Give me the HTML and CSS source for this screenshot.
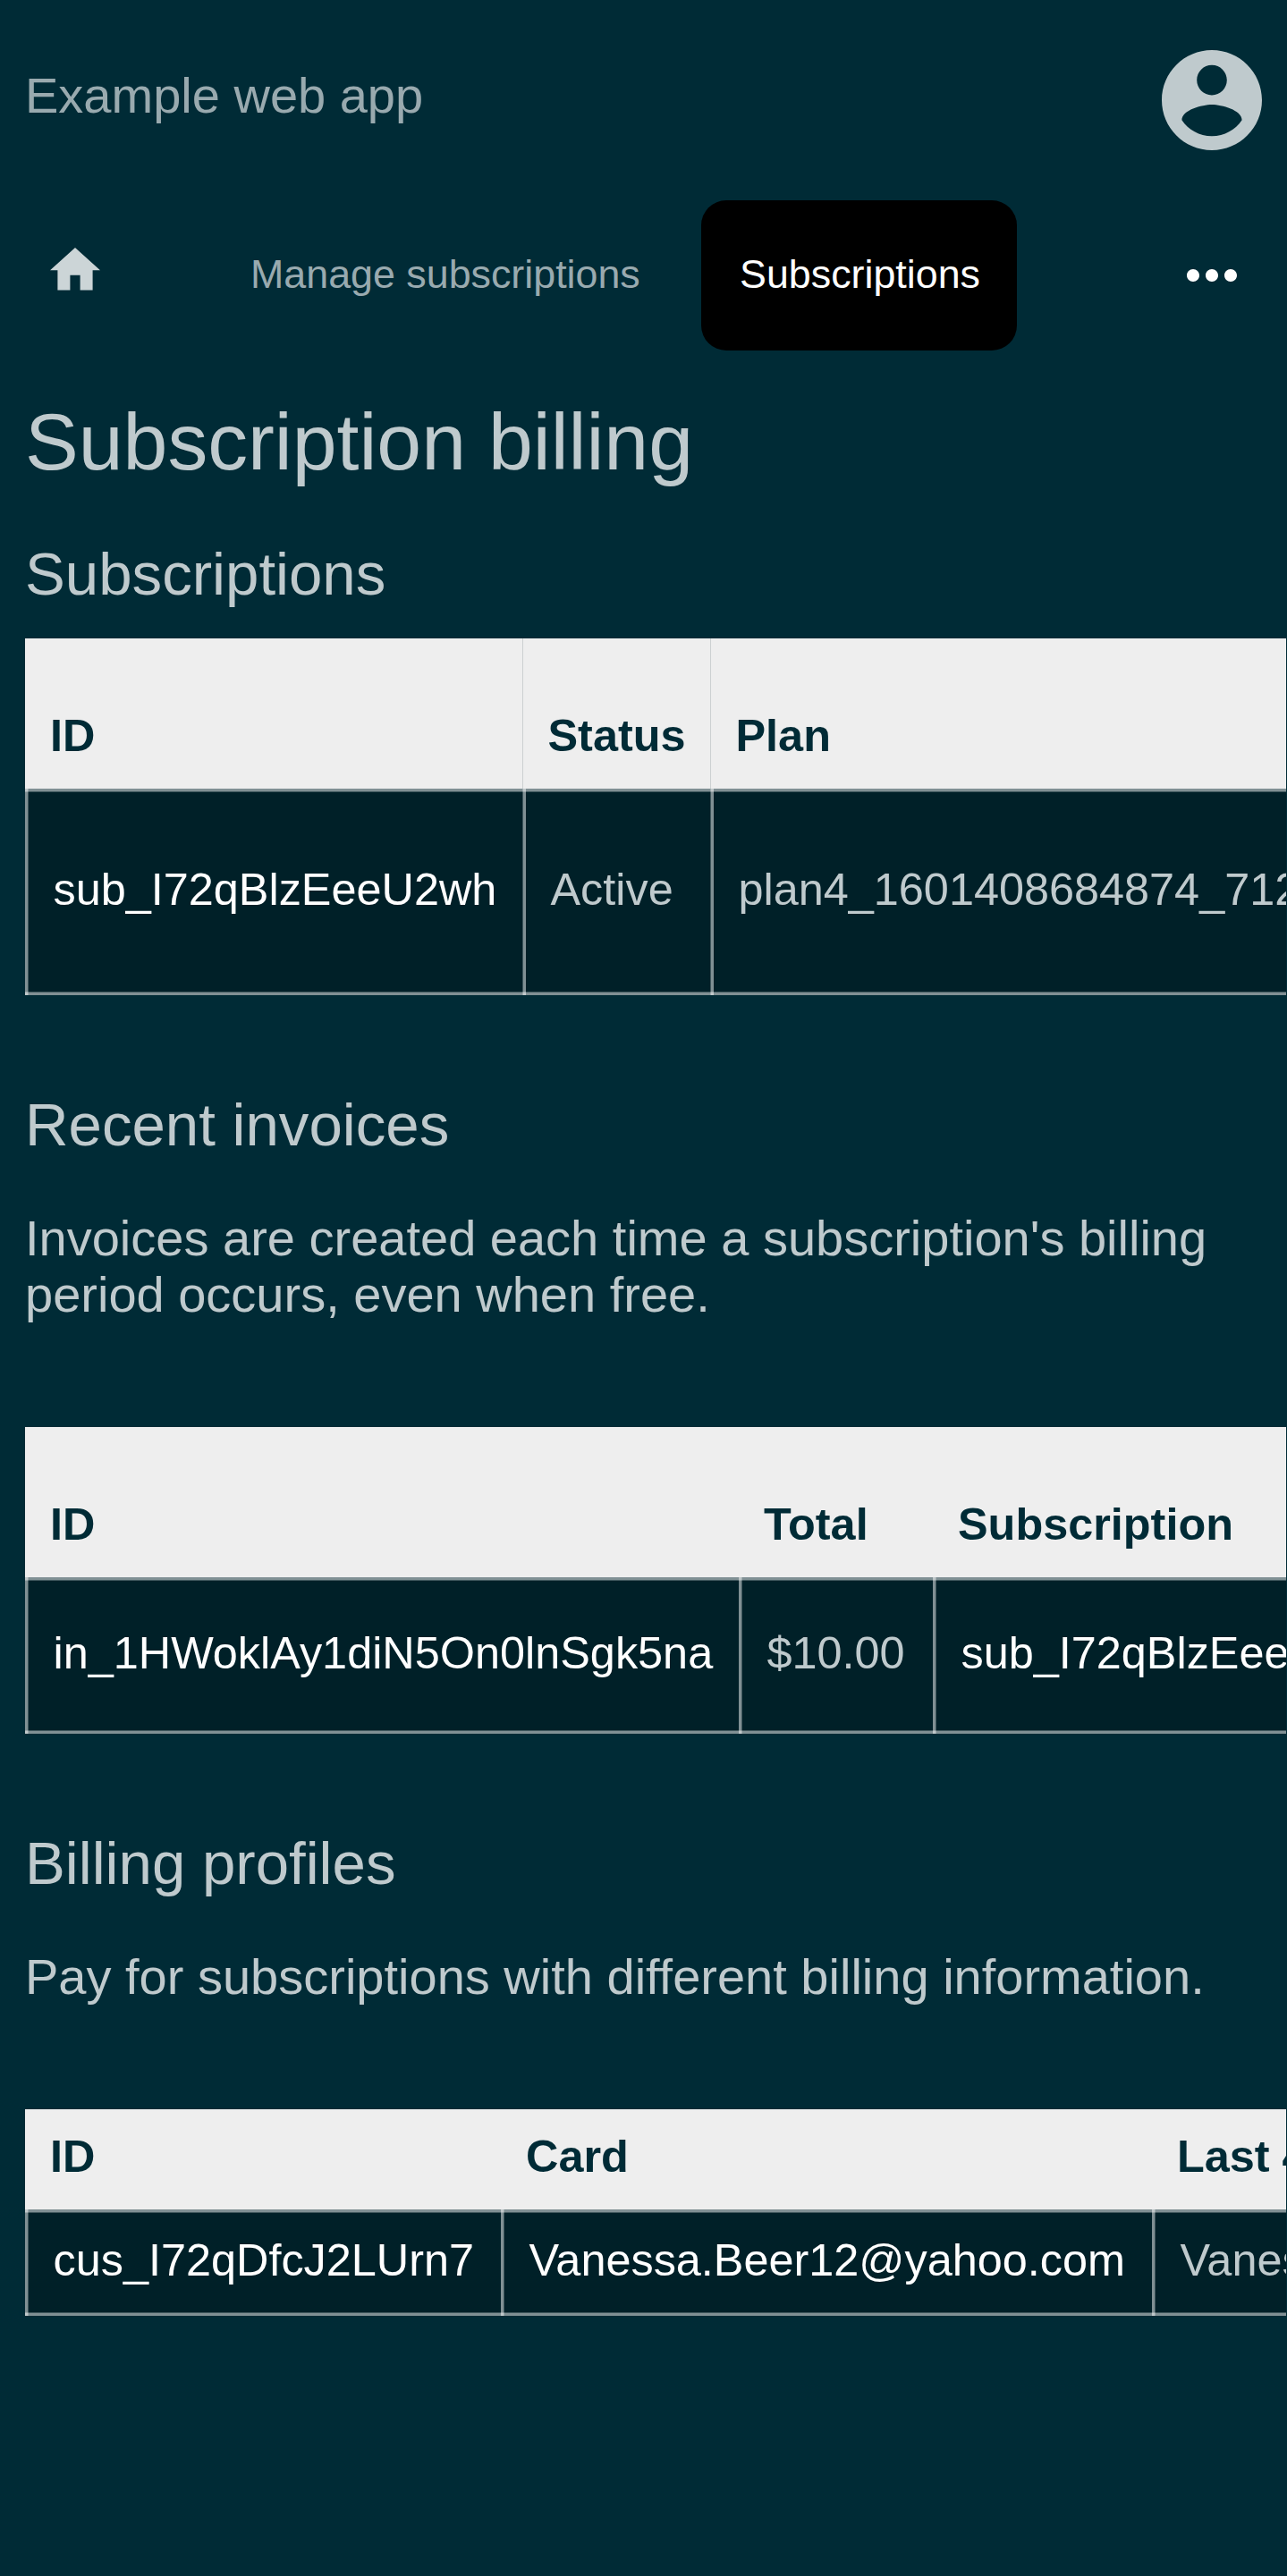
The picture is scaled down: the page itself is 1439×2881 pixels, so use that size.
FILE: index.html
```html
<!DOCTYPE html>
<html lang="en">
<head>
<meta charset="utf-8">
<title>Subscription billing</title>
<link rel="stylesheet" href="styles.css">
</head>
<body>
<header class="header">
  <span class="brand">Example web app</span>
  <svg class="account" viewBox="2 2 20 20"><path fill="currentColor" d="M12 2C6.48 2 2 6.48 2 12s4.48 10 10 10 10-4.48 10-10S17.52 2 12 2zm0 3c1.66 0 3 1.34 3 3s-1.34 3-3 3-3-1.34-3-3 1.34-3 3-3zm0 14.2c-2.5 0-4.71-1.28-6-3.22.03-1.99 4-3.08 6-3.08 1.99 0 5.97 1.09 6 3.08-1.29 1.94-3.5 3.22-6 3.22z"/></svg>
</header>
<nav class="nav">
  <svg class="home" viewBox="2 3 20 17"><path fill="currentColor" d="M10 20v-6h4v6h5v-8h3L12 3 2 12h3v8z"/></svg>
  <div class="links">
    <a class="link">Manage subscriptions</a>
    <a class="link active">Subscriptions</a>
  </div>
  <svg class="more" viewBox="4 10 16 4"><path fill="currentColor" d="M6 10c-1.1 0-2 .9-2 2s.9 2 2 2 2-.9 2-2-.9-2-2-2zm12 0c-1.1 0-2 .9-2 2s.9 2 2 2 2-.9 2-2-.9-2-2-2zm-6 0c-1.1 0-2 .9-2 2s.9 2 2 2 2-.9 2-2-.9-2-2-2z"/></svg>
</nav>
<main class="content">
  <h1>Subscription billing</h1>
  <section class="subscriptions">
    <h2>Subscriptions</h2>
    <table>
      <colgroup><col class="sub-id"><col class="sub-status"><col></colgroup>
      <tr><th>ID</th><th>Status</th><th>Plan</th></tr>
      <tr><td><a>sub_I72qBlzEeeU2wh</a></td><td>Active</td><td>plan4_1601408684874_712</td></tr>
    </table>
  </section>
  <section class="invoices">
    <h2>Recent invoices</h2>
    <p>Invoices are created each time a subscription's billing period occurs, even when free.</p>
    <table>
      <colgroup><col class="inv-id"><col class="inv-total"><col></colgroup>
      <tr><th>ID</th><th>Total</th><th>Subscription</th></tr>
      <tr><td><a>in_1HWoklAy1diN5On0lnSgk5na</a></td><td>$10.00</td><td><a>sub_I72qBlzEeeU2wh</a></td></tr>
    </table>
  </section>
  <section class="profiles">
    <h2>Billing profiles</h2>
    <p>Pay for subscriptions with different billing information.</p>
    <table>
      <colgroup><col class="pro-id"><col class="pro-card"><col></colgroup>
      <tr><th>ID</th><th>Card</th><th>Last 4</th></tr>
      <tr><td><a>cus_I72qDfcJ2LUrn7</a></td><td><a>Vanessa.Beer12@yahoo.com</a></td><td>Vanessa</td></tr>
    </table>
  </section>
</main>
</body>
</html>
```
FILE: styles.css
```css
* { box-sizing: border-box; }
html, body { margin: 0; background: #002b36; }
body {
  height: 2881px;
  overflow: hidden;
  font: 56px/63px "Liberation Sans", Arial, sans-serif;
  color: #bfcacd;
}
svg { display: block; }
.header {
  display: flex;
  justify-content: space-between;
  align-items: flex-start;
  height: 224px;
  padding: 56px 28px 0;
}
.brand { margin-top: 18.5px; color: #99aaaf; }
.account { width: 112px; height: 112px; }
.nav {
  display: flex;
  align-items: flex-start;
  height: 168px;
  padding: 0 56px;
  font-size: 44.8px;
  line-height: 50px;
}
.home { width: 56px; height: 47.6px; margin-top: 53.2px; color: #ccd5d7; }
.links { display: flex; flex: 1; justify-content: space-between; margin: 0 190px 0 126px; }
.link {
  height: 168px;
  padding: 57px 42px 0;
  border-radius: 28px;
  color: #99aaaf;
  white-space: nowrap;
}
.active { padding: 57px 41px 0 43px; background: #000; color: #fff; }
.more { width: 56px; height: 14px; margin-top: 77px; color: #fff; }
.content { padding: 52px 1px 0 28px; }
h1, h2 { margin: 0; font-weight: 400; }
h1 { font-size: 89.6px; line-height: 100px; margin-bottom: 60px; }
h2 { font-size: 67.2px; line-height: 76px; }
p { margin: 57px 28px 117px 0; }
table {
  width: 100%;
  table-layout: fixed;
  border-collapse: separate;
  border-spacing: 0;
  font-size: 50.4px;
  line-height: 56px;
}
th, td {
  overflow: hidden;
  white-space: nowrap;
  text-align: left;
  vertical-align: top;
}
th {
  height: 168px;
  padding: 81px 0 0 28px;
  background: #eee;
  color: #002b36;
}
td {
  padding: 0 0 0 31.5px;
  background:
    linear-gradient(90deg, rgba(255,255,255,.5) 3px, rgba(255,255,255,.25) 3px 4px, transparent 4px),
    linear-gradient(rgba(255,255,255,.5) 3px, rgba(255,255,255,.25) 3px 4px, transparent 4px),
    linear-gradient(0deg, rgba(255,255,255,.5) 3px, rgba(255,255,255,.25) 3px 4px, transparent 4px),
    #002028;
}
td a { color: #fff; }
.subscriptions table { margin-top: 34px; }
.subscriptions th + th { border-left: 1px solid #ccd0d1; padding-left: 27.5px; }
.subscriptions td { height: 231px; padding-top: 85px; }
.subscriptions td + td {
  background:
    linear-gradient(90deg, rgba(255,255,255,.25) 1px, rgba(255,255,255,.5) 1px 4px, transparent 4px),
    linear-gradient(rgba(255,255,255,.5) 3px, rgba(255,255,255,.25) 3px 4px, transparent 4px),
    linear-gradient(0deg, rgba(255,255,255,.5) 3px, rgba(255,255,255,.25) 3px 4px, transparent 4px),
    #002028;
}
.sub-id { width: 556px; }
.sub-status { width: 210px; }
.invoices { margin-top: 107px; }
.invoices td { height: 175px; padding-top: 57px; }
.inv-id { width: 798px; }
.inv-total { width: 217px; }
.profiles { margin-top: 107px; }
.profiles th { height: 112px; padding-top: 25px; }
.profiles td { height: 119px; padding-top: 29px; }
.pro-id { width: 532px; }
.pro-card { width: 728px; }
```
